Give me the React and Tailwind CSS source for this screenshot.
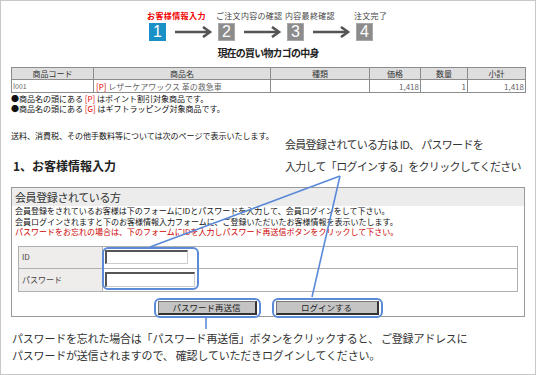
import React from "react";

const steps = [
  { label: "お客様情報入力", n: "1", active: true },
  { label: "ご注文内容の確認", n: "2" },
  { label: "内容最終確認", n: "3" },
  { label: "注文完了", n: "4" },
];

function Arrow() {
  return (
    <svg width="38" height="12" viewBox="0 0 38 12" className="ml-[9px]">
      <line x1="0" y1="6" x2="35" y2="6" stroke="#555" strokeWidth="2.6" />
      <polyline points="28,1 35,6 28,11" fill="none" stroke="#555" strokeWidth="2.6" />
    </svg>
  );
}

export default function App() {
  return (
    <div className="relative w-[536px] h-[375px] overflow-hidden bg-white border border-[#c8c8c8] font-['Noto_Sans_CJK_JP',sans-serif] text-[#222]">
      <div className="px-[10px] pt-[9px] flex flex-col">
        {/* steps */}
        <div className="flex ml-[136px]">
          {steps.map((s, i) => (
            <div key={s.n} className="w-[69px] flex flex-col">
              <div
                className={
                  s.active
                    ? "text-[8px] leading-[11px] tracking-[0.4px] whitespace-nowrap text-[#f00000] font-bold"
                    : "text-[8px] leading-[11px] tracking-[0.3px] whitespace-nowrap text-[#444]"
                }
              >
                {s.label}
              </div>
              <div className="mt-[2px] flex items-center">
                <div
                  className={
                    s.active
                      ? "ml-[2px] w-[17px] h-[18px] flex items-center justify-center bg-[#1990c6] text-white text-[16px] leading-none font-['Liberation_Sans',sans-serif]"
                      : "ml-[2px] w-[17px] h-[18px] flex items-center justify-center bg-[#8c8c8c] border border-[#a8a8a8] text-white text-[16px] leading-none font-['Liberation_Sans',sans-serif]"
                  }
                >
                  {s.n}
                </div>
                {i < 3 && <Arrow />}
              </div>
            </div>
          ))}
        </div>
        <div className="mt-[5px] text-center text-[10px] leading-[13px] font-bold tracking-[-0.8px] text-[#222]">
          現在の買い物カゴの中身
        </div>

        {/* cart table */}
        <table className="mt-[8px] w-[514px] table-fixed border-collapse text-[8px]">
          <colgroup>
            <col className="w-[82px]" />
            <col className="w-[177px]" />
            <col className="w-[99px]" />
            <col className="w-[51px]" />
            <col className="w-[47px]" />
            <col className="w-[58px]" />
          </colgroup>
          <thead>
            <tr className="h-[12px] bg-[#dedede] text-[#333]">
              {["商品コード", "商品名", "種類", "価格", "数量", "小計"].map((h) => (
                <th key={h} className="border border-[#8c8c8c] font-normal leading-[11px] p-0 text-center">
                  {h}
                </th>
              ))}
            </tr>
          </thead>
          <tbody>
            <tr className="h-[13px] text-[#666]">
              <td className="border border-[#8c8c8c] leading-[11px] px-[1px] text-[7px]">I001</td>
              <td className="border border-[#8c8c8c] leading-[11px] px-[2px] whitespace-nowrap">
                <span className="text-[#e00000]">[P]</span> レザーケアワックス 革の救急車
              </td>
              <td className="border border-[#8c8c8c]"></td>
              <td className="border border-[#8c8c8c] leading-[11px] px-[1px] text-right">1,418</td>
              <td className="border border-[#8c8c8c] leading-[11px] px-[1px] text-right">1</td>
              <td className="border border-[#8c8c8c] leading-[11px] px-[1px] text-right">1,418</td>
            </tr>
          </tbody>
        </table>

        <div className="mt-[1px] text-[8px] leading-[10px] text-[#111] whitespace-nowrap">
          <div>
            ●商品名の頭にある <span className="text-[#e00000]">[P]</span> はポイント割引対象商品です。
          </div>
          <div>
            ●商品名の頭にある <span className="text-[#e00000]">[G]</span> はギフトラッピング対象商品です。
          </div>
        </div>

        <div className="mt-[17px] text-[8px] leading-[10px] text-[#111] whitespace-nowrap">
          送料、消費税、その他手数料等については次のページで表示いたします。
        </div>

        <div className="-mt-[8px] flex items-end">
          <div className="w-[274px] shrink-0 pl-[2px] text-[12px] leading-[22px] font-bold text-[#222]">
            1、お客様情報入力
          </div>
          <div className="text-[11px] leading-[22px] tracking-[-0.7px] text-[#333] whitespace-nowrap">
            <div>会員登録されている方は ID、 パスワードを</div>
            <div>入力して「ログインする」をクリックしてください</div>
          </div>
        </div>

        {/* member box */}
        <div className="mt-[10px] w-[514px] border border-[#9a9a9a] pb-[1px]">
          <div className="h-[18px] bg-[#ececec] pl-[3px] text-[11px] leading-[18px] tracking-[-0.4px] text-[#333]">
            会員登録されている方
          </div>
          <div className="px-[3px] text-[8px] leading-[10.5px] text-[#111] whitespace-nowrap">
            <div>会員登録をされているお客様は下のフォームにIDとパスワードを入力して、会員ログインをして下さい。</div>
            <div>会員ログインされますと下のお客様情報入力フォームに、ご登録いただいたお客様情報を表示いたします。</div>
            <div className="text-[#cc0000]">
              パスワードをお忘れの場合は、下のフォームにIDを入力しパスワード再送信ボタンをクリックして下さい。
            </div>
          </div>

          <table className="mt-[8px] mx-[6px] w-[500px] table-fixed border-collapse text-[8px]">
            <colgroup>
              <col className="w-[84px]" />
              <col />
            </colgroup>
            <tbody>
              <tr className="h-[22px]">
                <td className="border border-[#b0b0b0] bg-[#efecec] pl-[3px] text-[#444]">ID</td>
                <td className="border border-[#b0b0b0] pl-[2px]">
                  <div className="w-[83px] h-[14px] bg-white border-t-2 border-l-2 border-b border-r border-t-[#555] border-l-[#555] border-b-[#ccc] border-r-[#ccc]"></div>
                </td>
              </tr>
              <tr className="h-[23px]">
                <td className="border border-[#b0b0b0] bg-[#efecec] pl-[3px] text-[#444]">パスワード</td>
                <td className="border border-[#b0b0b0] pl-[2px]">
                  <div className="w-[90px] h-[15px] bg-white border-t-2 border-l-2 border-b border-r border-t-[#555] border-l-[#555] border-b-[#ccc] border-r-[#ccc]"></div>
                </td>
              </tr>
            </tbody>
          </table>

          <div className="mt-[9px] flex justify-center gap-[19px]">
            <div className="relative w-[99px] h-[14px] bg-[#c4c4c4] border-t border-l border-r-2 border-b-2 border-t-[#777] border-l-[#777] border-r-[#333] border-b-[#333] flex items-center justify-center text-[8.5px] leading-none text-[#222]">
              パスワード再送信
              <span className="absolute left-[-5px] right-[-6px] top-[-4px] bottom-[-5px] rounded-[6px] border-2 border-[#5a8ad8]"></span>
            </div>
            <div className="relative w-[103px] h-[14px] bg-[#c4c4c4] border-t border-l border-r-2 border-b-2 border-t-[#777] border-l-[#777] border-r-[#333] border-b-[#333] flex items-center justify-center text-[8.5px] leading-none text-[#222]">
              ログインする
              <span className="absolute left-[-5px] right-[-6px] top-[-4px] bottom-[-5px] rounded-[6px] border-2 border-[#5a8ad8]"></span>
            </div>
          </div>
        </div>

        <div className="mt-[13px] pl-[1px] text-[11px] leading-[17px] tracking-[-0.2px] text-[#333] whitespace-nowrap">
          <div>パスワードを忘れた場合は「パスワード再送信」ボタンをクリックすると、 ご登録アドレスに</div>
          <div>パスワードが送信されますので、 確認していただきログインしてください。</div>
        </div>
      </div>

      {/* annotation overlays */}
      <div className="absolute left-[101px] top-[246px] w-[97px] h-[43px] rounded-[6px] border-2 border-[#5a8ad8] pointer-events-none"></div>
      <svg className="absolute left-0 top-0 pointer-events-none" width="534" height="373" viewBox="0 0 534 373">
        <line x1="339" y1="175" x2="149" y2="246" stroke="#5a8ad8" strokeWidth="1.6" />
        <line x1="339" y1="175" x2="311" y2="296" stroke="#5a8ad8" strokeWidth="1.6" />
        <line x1="205" y1="316" x2="205" y2="328" stroke="#5a8ad8" strokeWidth="1.6" />
      </svg>
    </div>
  );
}
